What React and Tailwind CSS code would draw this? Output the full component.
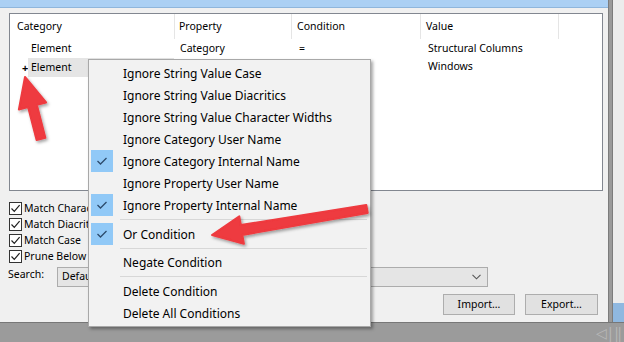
import React from "react";

function Check() {
  return (
    <svg width="11" height="11" viewBox="0 0 11 11" className="block">
      <path d="M1.5 5.5 L4.3 8.4 L9.6 2.2" fill="none" stroke="#1f1f1f" strokeWidth="1.2" />
    </svg>
  );
}

function CheckRow({ label }) {
  return (
    <div className="flex h-[16px] items-center">
      <div className="flex h-[13px] w-[13px] items-center justify-center border border-[#333] bg-white">
        <Check />
      </div>
      <span className="ml-[2px] text-[10.5px] leading-none text-black">{label}</span>
    </div>
  );
}

function MenuItem({ label, checked }) {
  return (
    <div className="flex h-[22px] items-center">
      <div className="ml-[2px] flex h-[22px] w-[22px] items-center justify-center">
        {checked && (
          <div className="flex h-[22px] w-[22px] items-center justify-center bg-[#91c9f7]">
            <svg width="12" height="10" viewBox="0 0 12 10">
              <path d="M1.5 5 L4.5 8 L10.5 2" fill="none" stroke="#2d4b6c" strokeWidth="1.3" />
            </svg>
          </div>
        )}
      </div>
      <span className="ml-[10px] pt-[2px] text-[12px] leading-none text-black">{label}</span>
    </div>
  );
}

function Sep() {
  return (
    <div className="flex h-[7px] items-center pl-[31px] pr-[3px]">
      <div className="h-px w-full bg-[#d7d7d7]" />
    </div>
  );
}

export default function App() {
  return (
    <div className="relative h-[342px] w-[624px] overflow-hidden bg-[#9b9b9b] font-['Noto_Sans',sans-serif] text-[10.5px] text-black">
      <div className="flex h-[322px]">
        {/* dialog */}
        <div className="flex h-[322px] w-[608px] flex-col bg-[#f0f0f0]">
          <div className="h-[8px] border-b border-[#8fb6dc] bg-[#abd0f4]" />
          {/* list */}
          <div className="ml-[9px] mt-[5px] h-[178px] w-[594px] border border-[#828790] bg-white">
            <div className="flex h-[25px]">
              <div className="flex w-[165px] items-center border-r border-[#e5e5e5] pl-[7px] pt-[1px]">Category</div>
              <div className="flex w-[117px] items-center border-r border-[#e5e5e5] pl-[4px] pt-[1px]">Property</div>
              <div className="flex w-[129px] items-center border-r border-[#e5e5e5] pl-[5px] pt-[1px]">Condition</div>
              <div className="flex w-[138px] items-center border-r border-[#e5e5e5] pl-[5px] pt-[1px]">Value</div>
            </div>
            <div className="flex h-[19px] items-center">
              <div className="w-[166px] pl-[21px]">Element</div>
              <div className="w-[117px] pl-[4px]">Category</div>
              <div className="w-[129px] pl-[6px]">=</div>
              <div className="pl-[6px]">Structural Columns</div>
            </div>
            <div className="flex h-[19px] items-center">
              <div className="flex w-[166px] items-center">
                <span className="ml-[12px] w-[6px] text-[11px] font-bold leading-none">+</span>
                <div className="flex h-[19px] w-[146px] items-center bg-[#e5e5e5] pl-[3px]">Element</div>
              </div>
              <div className="w-[117px]" />
              <div className="w-[129px]" />
              <div className="-mt-[2px] pl-[6px]">Windows</div>
            </div>
          </div>
          {/* checkboxes */}
          <div className="ml-[9px] mt-[9px] flex flex-col">
            <CheckRow label="Match Character Widths" />
            <CheckRow label="Match Diacritics" />
            <CheckRow label="Match Case" />
            <CheckRow label="Prune Below Match" />
          </div>
          {/* search */}
          <div className="mt-[3px] flex h-[20px] items-center pl-[8px]">
            <span className="-mt-[5px] w-[49px]">Search:</span>
            <div className="flex h-[20px] w-[431px] items-center justify-between border border-[#acacac] bg-[#e5e5e5] pl-[4px] pr-[6px]">
              <span>Default</span>
              <svg width="9" height="6" viewBox="0 0 9 6">
                <path d="M0.5 0.8 L4.5 4.8 L8.5 0.8" fill="none" stroke="#555" strokeWidth="1.1" />
              </svg>
            </div>
          </div>
          {/* buttons */}
          <div className="mt-[7px] flex justify-end gap-[10px] pr-[10px]">
            <div className="flex h-[21px] w-[72px] items-center justify-center border border-[#adadad] bg-[#e1e1e1]">Import...</div>
            <div className="flex h-[21px] w-[73px] items-center justify-center border border-[#adadad] bg-[#e1e1e1]">Export...</div>
          </div>
        </div>
        {/* right strip */}
        <div className="flex h-[322px] w-[5px] border-x border-[#7c7c7c] bg-[#9a9a9a]" />
        <div className="flex h-[322px] w-[11px] flex-col bg-[#ececec]">
          <div className="flex-1" />
          <div className="h-[19px] bg-[#8fb8e0]" />
        </div>
      </div>
      <div className="flex h-[20px] items-center justify-end border-t border-[#777] pr-[2px] text-[14px] text-[#b8b8b8]">
        ◁|‖
      </div>

      {/* context menu */}
      <div className="absolute left-[88px] top-[59px] flex h-[268px] w-[283px] flex-col border border-[#a8a8a8] bg-[#f2f2f2] py-[2px] shadow-[2px_2px_3px_rgba(0,0,0,0.35)]">
        <MenuItem label="Ignore String Value Case" />
        <MenuItem label="Ignore String Value Diacritics" />
        <MenuItem label="Ignore String Value Character Widths" />
        <MenuItem label="Ignore Category User Name" />
        <MenuItem label="Ignore Category Internal Name" checked />
        <MenuItem label="Ignore Property User Name" />
        <MenuItem label="Ignore Property Internal Name" checked />
        <Sep />
        <MenuItem label="Or Condition" checked />
        <Sep />
        <MenuItem label="Negate Condition" />
        <Sep />
        <MenuItem label="Delete Condition" />
        <MenuItem label="Delete All Conditions" />
      </div>

      {/* arrows */}
      <svg className="pointer-events-none absolute left-0 top-0" width="624" height="342" viewBox="0 0 624 342">
        <defs>
          <filter id="sh" x="-20%" y="-20%" width="140%" height="140%">
            <feDropShadow dx="1.5" dy="2" stdDeviation="1.5" floodColor="#000" floodOpacity="0.35" />
          </filter>
        </defs>
        <polygon
          points="25,77 46.1,102.5 36.9,104.9 45.4,137.9 36.6,140.1 28.1,107.1 18.9,109.5"
          fill="#ee3a3f"
          stroke="#ee3a3f"
          strokeWidth="2"
          strokeLinejoin="round"
          filter="url(#sh)"
        />
        <polygon
          points="212,235 239.3,216.2 240.8,225.1 366.3,205 367.7,213 242.4,234.9 243.9,243.8"
          fill="#ee3a3f"
          stroke="#ee3a3f"
          strokeWidth="2"
          strokeLinejoin="round"
          filter="url(#sh)"
        />
      </svg>
    </div>
  );
}
